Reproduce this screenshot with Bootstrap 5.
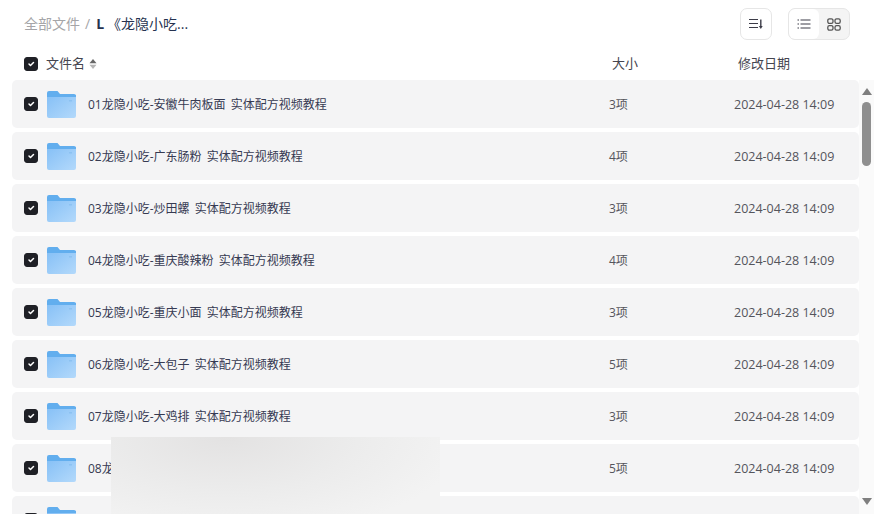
<!DOCTYPE html>
<html lang="zh">
<head>
<meta charset="utf-8">
<link href="https://cdn.jsdelivr.net/npm/bootstrap@5.3.0/dist/css/bootstrap.min.css" rel="stylesheet">
<style>
html,body{height:514px;overflow:hidden;background:#fff}
body{font-family:"Open Sans","Noto Sans CJK SC",sans-serif;font-size:12px;color:#3c3c48;position:relative}
.topbar{height:48px;padding:8px 24px 0 24px}
.crumb-box{height:30px}
.crumb-root{font-size:14px;color:#a5a5a8}
.crumb-sep{font-size:14px;color:#a5a5a8;margin:0 6px 0 5px}
.crumb-now{font-size:14px;color:#26324f;font-weight:400}
.crumb-now b{font-weight:700;margin-right:3px}
.tool-btn{width:32px;height:32px;border:1px solid #e6e6e6;border-radius:7px;background:#fff;padding:0}
.tool-group{width:62px;height:32px;border:1px solid #e6e6e6;border-radius:7px;background:#f4f4f4;overflow:hidden;margin-left:16px}
.tool-on{width:30px;background:#fff;border-radius:6px}
.tool-off{flex:1}
.head-row{height:32px;font-size:13px;color:#45454f;padding-left:24px}
.chk.form-check-input{width:14px;height:14px;margin:0;border-radius:3px;background-color:#1f2026;border-color:#1f2026;flex:none;background-size:10px}
.col-name{width:576px;flex:none}
.col-size{width:138px;flex:none;padding-left:12px}
.sort-mark{margin-left:4px}
.file-area{height:434px;overflow:hidden}
.file-list{width:859px;padding-left:12px;flex:none}
.file-row{height:48px;background:#f4f4f5;border-radius:5px;margin-bottom:4px;padding-left:12px}
.file-row .ico{margin:0 12px 0 9px;flex:none}
.row-name,.row-size,.row-date{position:relative;top:1px}
.row-name{width:521px;flex:none;color:#363a52;word-spacing:2px}
.row-size{width:125px;flex:none;color:#55555c}
.row-date{color:#55555c;font-size:12.5px}
.sbar{width:15px;flex:none;background:#fafafa;position:relative}
.arrow-up,.arrow-down{position:absolute;left:3px;width:0;height:0;border-left:5px solid transparent;border-right:5px solid transparent}
.arrow-up{top:8px;border-bottom:7px solid #7f7f7f}
.arrow-down{top:418px;border-top:7px solid #7f7f7f}
.thumb{position:absolute;left:3px;top:22px;width:9px;height:64px;background:#8f8f8f;border-radius:5px}
.mask-patch{position:absolute;left:111px;top:437px;width:329px;height:77px;background:radial-gradient(ellipse 240px 100px at 35% 0,#e3e2e2 0%,#ececec 55%,#f3f3f3 100%);pointer-events:none}
</style>
</head>
<body>
<div class="topbar d-flex align-items-start">
  <div class="crumb-box d-flex align-items-center">
    <span class="crumb-root">全部文件</span><span class="crumb-sep">/</span><span class="crumb-now"><b>L</b>《龙隐小吃...</span>
  </div>
  <div class="ms-auto d-flex">
    <button class="tool-btn d-flex align-items-center justify-content-center" aria-label="排序">
      <svg width="16" height="14" viewBox="0 0 16 14"><path d="M1 2.5h9M1 6.5h9M1 10.5h9" stroke="#3c3c48" stroke-width="1.2" fill="none"/><path d="M12.8 2.5v7" stroke="#3c3c48" stroke-width="1.4"/><path d="M10.9 9h3.8l-1.9 3z" fill="#3c3c48"/></svg>
    </button>
    <div class="tool-group d-flex">
      <div class="tool-on d-flex align-items-center justify-content-center">
        <svg width="14" height="12" viewBox="0 0 14 12"><path d="M3.5 2h10M3.5 6h10M3.5 10h10" stroke="#3c3c48" stroke-width="1.2"/><path d="M.5 2h1.5M.5 6h1.5M.5 10h1.5" stroke="#3c3c48" stroke-width="1.2"/></svg>
      </div>
      <div class="tool-off d-flex align-items-center justify-content-center">
        <svg width="14" height="13" viewBox="0 0 14 13" fill="none" stroke="#555" stroke-width="1.3"><rect x=".8" y=".8" width="5.2" height="4.6" rx="1.6"/><rect x="8" y=".8" width="5.2" height="4.6" rx="1.6"/><rect x=".8" y="7.6" width="5.2" height="4.6" rx="1.6"/><rect x="8" y="7.6" width="5.2" height="4.6" rx="1.6"/></svg>
      </div>
    </div>
  </div>
</div>
<div class="head-row d-flex align-items-center">
  <div class="col-name d-flex align-items-center">
    <input class="form-check-input chk me-2" type="checkbox" checked aria-label="全选">
    <span>文件名</span>
    <svg class="sort-mark" width="8" height="12" viewBox="0 0 8 12"><path d="M4 1l3.5 4.2H.5z" fill="#666"/><path d="M4 11L.5 6.8h7z" fill="#b5b5b5"/></svg>
  </div>
  <div class="col-size">大小</div>
  <div>修改日期</div>
</div>
<div class="file-area d-flex">
  <div class="file-list" id="list"></div>
  <div class="sbar"><span class="arrow-up"></span><span class="thumb"></span><span class="arrow-down"></span></div>
</div>
<div class="mask-patch"></div>
<svg width="0" height="0" class="position-absolute">
  <defs>
    <linearGradient id="fg" x1="0" y1="0" x2="1" y2="1"><stop offset="0" stop-color="#86c0f6"/><stop offset="1" stop-color="#b3d9fb"/></linearGradient>
    <symbol id="folder" viewBox="0 0 29 27">
      <path d="M0 2a2 2 0 0 1 2-2h8.5l2.5 3h14a2 2 0 0 1 2 2v4H0z" fill="#62aeee"/>
      <path d="M0 5h29v20a2 2 0 0 1-2 2H2a2 2 0 0 1-2-2z" fill="url(#fg)"/>
      <path d="M0 5h12l1.5-1h15.5v2H0z" fill="#62aeee"/>
      <rect x="22" y="9" width="3" height="1.5" fill="#8cc2f2"/>
    </symbol>
  </defs>
</svg>
<script>
var rows=[["01龙隐小吃-安徽牛肉板面 实体配方视频教程","3项"],["02龙隐小吃-广东肠粉 实体配方视频教程","4项"],["03龙隐小吃-炒田螺 实体配方视频教程","3项"],["04龙隐小吃-重庆酸辣粉 实体配方视频教程","4项"],["05龙隐小吃-重庆小面 实体配方视频教程","3项"],["06龙隐小吃-大包子 实体配方视频教程","5项"],["07龙隐小吃-大鸡排 实体配方视频教程","3项"],["08龙","5项"]];
var html=rows.map(function(r){return '<div class="file-row d-flex align-items-center"><input class="form-check-input chk" type="checkbox" checked aria-label="选择"><svg class="ico" width="29" height="27"><use href="#folder"/></svg><div class="row-name">'+r[0]+'</div><div class="row-size">'+r[1]+'</div><div class="row-date">2024-04-28 14:09</div></div>'}).join('');
html+='<div class="file-row d-flex align-items-center"><input class="form-check-input chk" type="checkbox" checked aria-label="选择"><svg class="ico" width="29" height="27"><use href="#folder"/></svg></div>';
document.getElementById('list').innerHTML=html;
</script>
</body>
</html>
